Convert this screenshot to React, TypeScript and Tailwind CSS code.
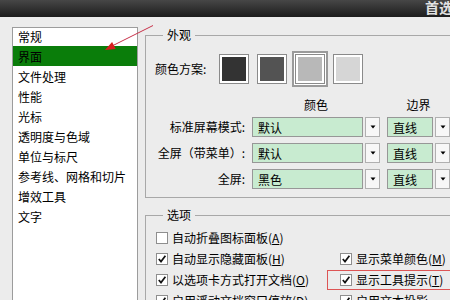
import React from "react";

const font = { fontFamily: '"Noto Sans CJK SC", "Noto Sans", sans-serif' };

const listItems = [
  "常规",
  "界面",
  "文件处理",
  "性能",
  "光标",
  "透明度与色域",
  "单位与标尺",
  "参考线、网格和切片",
  "增效工具",
  "文字",
];

function Select({ value, wide }: { value: string; wide: boolean }) {
  return (
    <div className={`flex h-[20px] shrink-0 ${wide ? "w-[128px]" : "w-[63px]"}`}>
      <div className="flex-1 border border-[#979797] bg-[#c8ebd0] pl-[5px] text-[12px] leading-[19px] text-black">
        {value}
      </div>
      <div className="ml-[2px] flex w-[15px] items-center justify-center border border-[#b0b0b0] bg-[#f7f7f7]">
        <svg width="6" height="4" viewBox="0 0 6 4">
          <polygon points="0.5,0.5 5.5,0.5 3,3.5" fill="#000" />
        </svg>
      </div>
    </div>
  );
}

function Check({ checked }: { checked: boolean }) {
  return (
    <div className="flex h-[12px] w-[12px] shrink-0 items-center justify-center border border-[#8e8e8e] bg-white">
      {checked && (
        <svg width="10" height="10" viewBox="0 0 10 10">
          <path d="M1.8 5 L4 7.6 L8.4 1.8" stroke="#111" strokeWidth="1.7" fill="none" />
        </svg>
      )}
    </div>
  );
}

function CheckItem({ checked, text, key2 }: { checked: boolean; text: string; key2: string }) {
  return (
    <div className="flex h-[21px] items-center gap-[4px] whitespace-nowrap text-[12px] leading-[16px] text-black">
      <Check checked={checked} />
      <span>
        {text}(<span className="underline">{key2}</span>)
      </span>
    </div>
  );
}

function Swatch({ color, selected }: { color: string; selected?: boolean }) {
  return (
    <div
      className={`h-[30px] w-[30px] shrink-0 border border-[#8a8a8a] bg-white p-[2px] ${
        selected ? "shadow-[0_0_0_1px_#ffffff,0_0_0_3px_#9a9a9a]" : ""
      }`}
    >
      <div className="h-full w-full" style={{ backgroundColor: color }} />
    </div>
  );
}

export default function App() {
  return (
    <div className="relative h-[300px] w-[450px] overflow-hidden bg-[#ececec]" style={font}>
      {/* title bar */}
      <div className="flex h-[17px] bg-linear-to-b from-[#474747] to-[#1d1d1d]">
        <span className="ml-[425px] whitespace-nowrap text-[14px] font-bold leading-[15px] text-[#e2e2e2]">
          首选项
        </span>
      </div>

      <div className="flex pl-[12px] pt-[10px]">
        {/* left list */}
        <div className="h-[300px] w-[126px] shrink-0 border border-[#9c9c9c] bg-white">
          {listItems.map((t, i) => (
            <div
              key={t}
              className={`whitespace-nowrap pl-[5px] text-[12px] leading-[18px] ${
                i === 0 ? "h-[18px]" : "h-[20px] pt-[2px]"
              } ${i === 1 ? "bg-[#0a7d0a] text-black" : "text-black"}`}
            >
              {t}
            </div>
          ))}
        </div>

        {/* right side */}
        <div className="ml-[7px] flex w-[330px] shrink-0 flex-col">
          <fieldset className="border border-[#a8a8a8] pb-[8px]">
            <legend className="ml-[17px] px-[4px] text-[12px] leading-[16px] text-black">外观</legend>
            <div className="mt-[11px] flex items-center">
              <div className="ml-[9px] w-[64px] text-[12px] leading-[16px] text-black">颜色方案:</div>
              <div className="flex gap-[8px]">
                <Swatch color="#333333" />
                <Swatch color="#535353" />
                <Swatch color="#b8b8b8" selected />
                <Swatch color="#d6d6d6" />
              </div>
            </div>
            <div className="mt-[13px] flex text-[12px] leading-[16px] text-black">
              <div className="w-[106px]" />
              <div className="w-[128px] text-center">颜色</div>
              <div className="w-[7px]" />
              <div className="w-[63px] text-center">边界</div>
            </div>
            <div className="mt-[4px] flex flex-col gap-[6px]">
              {[
                ["标准屏幕模式:", "默认"],
                ["全屏（带菜单）:", "默认"],
                ["全屏:", "黑色"],
              ].map(([label, v]) => (
                <div key={label} className="flex items-center gap-[7px]">
                  <div className="w-[99px] whitespace-nowrap text-right text-[12px] leading-[20px] text-black">
                    {label}
                  </div>
                  <Select value={v} wide />
                  <Select value="直线" wide={false} />
                </div>
              ))}
            </div>
          </fieldset>

          <fieldset className="mt-[9px] border border-[#a8a8a8]">
            <legend className="ml-[17px] px-[4px] text-[12px] leading-[16px] text-black">选项</legend>
            <div className="flex pt-[4px]">
              <div className="ml-[10px] flex w-[184px] flex-col">
                <CheckItem checked={false} text="自动折叠图标面板" key2="A" />
                <CheckItem checked text="自动显示隐藏面板" key2="H" />
                <CheckItem checked text="以选项卡方式打开文档" key2="O" />
                <CheckItem checked text="启用浮动文档窗口停放" key2="D" />
              </div>
              <div className="flex flex-col">
                <div className="h-[21px]" />
                <CheckItem checked text="显示菜单颜色" key2="M" />
                <CheckItem checked text="显示工具提示" key2="T" />
                <div className="flex h-[21px] items-center gap-[4px] whitespace-nowrap text-[12px] leading-[16px] text-black">
                  <Check checked />
                  <span>启用文本投影</span>
                </div>
              </div>
            </div>
          </fieldset>
        </div>
      </div>

      {/* annotation overlays */}
      <div className="pointer-events-none absolute left-[327px] top-[270px] h-[20px] w-[140px] border border-[#dd5555]" />
      <svg className="pointer-events-none absolute left-0 top-0" width="450" height="300">
        <line x1="153" y1="25.5" x2="113" y2="45.5" stroke="#c8324a" strokeWidth="1" />
        <polygon points="105,50 112.1,41.9 115.7,49.1" fill="#d81e1e" />
      </svg>
    </div>
  );
}
